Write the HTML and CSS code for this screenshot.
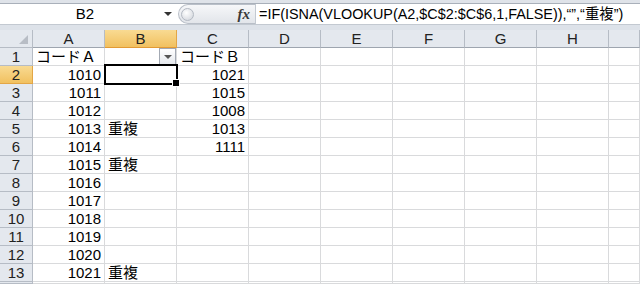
FILE: index.html
```html
<!DOCTYPE html>
<html lang="ja">
<head>
  <meta charset="UTF-8"/>
  <title>Book1 - Excel</title>
  <link rel="stylesheet" href="styles.css">
</head>
<body>

<div class="edge"></div>

<!-- formula bar -->
<div class="fbar">
  <div class="namebox"><span class="name">B2</span><span class="nb-arrow"></span></div>
  <div class="splitter"><span class="knob"></span><span class="fx">fx</span></div>
  <div class="formula">=IF(ISNA(VLOOKUP(A2,$C$2:$C$6,1,FALSE)),“”,“重複”)</div>
</div>
<div class="gap"></div>

<!-- sheet -->
<div class="sheet">
  <div class="row hdr">
    <div class="corner"><span class="tri"></span></div>
    <div class="ch">A</div><div class="ch sel">B</div><div class="ch">C</div><div class="ch">D</div>
    <div class="ch">E</div><div class="ch">F</div><div class="ch">G</div><div class="ch">H</div><div class="ch"></div>
  </div>
  <div class="row">
    <div class="rh">1</div><div class="c">コードＡ</div><div class="c drop"><span class="dd"></span></div><div class="c">コードＢ</div>
    <div class="c"></div><div class="c"></div><div class="c"></div><div class="c"></div><div class="c"></div><div class="c"></div>
  </div>
  <div class="row">
    <div class="rh sel">2</div><div class="c num">1010</div><div class="c cur"></div><div class="c num">1021</div>
    <div class="c"></div><div class="c"></div><div class="c"></div><div class="c"></div><div class="c"></div><div class="c"></div>
  </div>
  <div class="row">
    <div class="rh">3</div><div class="c num">1011</div><div class="c"></div><div class="c num">1015</div>
    <div class="c"></div><div class="c"></div><div class="c"></div><div class="c"></div><div class="c"></div><div class="c"></div>
  </div>
  <div class="row">
    <div class="rh">4</div><div class="c num">1012</div><div class="c"></div><div class="c num">1008</div>
    <div class="c"></div><div class="c"></div><div class="c"></div><div class="c"></div><div class="c"></div><div class="c"></div>
  </div>
  <div class="row">
    <div class="rh">5</div><div class="c num">1013</div><div class="c">重複</div><div class="c num">1013</div>
    <div class="c"></div><div class="c"></div><div class="c"></div><div class="c"></div><div class="c"></div><div class="c"></div>
  </div>
  <div class="row">
    <div class="rh">6</div><div class="c num">1014</div><div class="c"></div><div class="c num">1111</div>
    <div class="c"></div><div class="c"></div><div class="c"></div><div class="c"></div><div class="c"></div><div class="c"></div>
  </div>
  <div class="row">
    <div class="rh">7</div><div class="c num">1015</div><div class="c">重複</div><div class="c"></div>
    <div class="c"></div><div class="c"></div><div class="c"></div><div class="c"></div><div class="c"></div><div class="c"></div>
  </div>
  <div class="row">
    <div class="rh">8</div><div class="c num">1016</div><div class="c"></div><div class="c"></div>
    <div class="c"></div><div class="c"></div><div class="c"></div><div class="c"></div><div class="c"></div><div class="c"></div>
  </div>
  <div class="row">
    <div class="rh">9</div><div class="c num">1017</div><div class="c"></div><div class="c"></div>
    <div class="c"></div><div class="c"></div><div class="c"></div><div class="c"></div><div class="c"></div><div class="c"></div>
  </div>
  <div class="row">
    <div class="rh">10</div><div class="c num">1018</div><div class="c"></div><div class="c"></div>
    <div class="c"></div><div class="c"></div><div class="c"></div><div class="c"></div><div class="c"></div><div class="c"></div>
  </div>
  <div class="row">
    <div class="rh">11</div><div class="c num">1019</div><div class="c"></div><div class="c"></div>
    <div class="c"></div><div class="c"></div><div class="c"></div><div class="c"></div><div class="c"></div><div class="c"></div>
  </div>
  <div class="row">
    <div class="rh">12</div><div class="c num">1020</div><div class="c"></div><div class="c"></div>
    <div class="c"></div><div class="c"></div><div class="c"></div><div class="c"></div><div class="c"></div><div class="c"></div>
  </div>
  <div class="row">
    <div class="rh">13</div><div class="c num">1021</div><div class="c">重複</div><div class="c"></div>
    <div class="c"></div><div class="c"></div><div class="c"></div><div class="c"></div><div class="c"></div><div class="c"></div>
  </div>
  <div class="row last">
    <div class="rh"></div><div class="c"></div><div class="c"></div><div class="c"></div>
    <div class="c"></div><div class="c"></div><div class="c"></div><div class="c"></div><div class="c"></div><div class="c"></div>
  </div>
</div>

</body>
</html>
```

FILE: styles.css
```css
*{box-sizing:border-box}
body{margin:0;height:284px;overflow:hidden;background:#fff;color:#000;font-family:"Liberation Sans","Noto Sans CJK JP",sans-serif;font-size:15px}

/* window chrome */
.edge{height:4px;background:#dfe3e9;border-bottom:1px solid #a9b0ba}
.fbar{display:flex;height:21px;background:#fff;border-bottom:1px solid #c3c9d1}
.namebox{width:178px;display:flex;align-items:center}
.name{flex:1;text-align:center;line-height:20px;padding-left:6px}
.nb-arrow{width:0;height:0;border-left:4px solid transparent;border-right:4px solid transparent;border-top:4px solid #333;margin-right:6px}
.splitter{width:77px;display:flex;align-items:center;justify-content:space-between;padding:0 5px 0 2px;background:linear-gradient(#f6f7f9,#e2e5ea);border:1px solid #b9bfc8;border-right:none;border-radius:10px 0 0 10px}
.knob{width:13px;height:13px;border-radius:50%;background:radial-gradient(circle at 40% 35%,#fff,#cdd1d8);border:1px solid #b3b9c2}
.fx{font-family:"Liberation Serif",serif;font-style:italic;font-weight:bold;font-size:15px;color:#3a3a3a;line-height:18px}
.formula{flex:1;border-left:1px solid #c3c9d1;padding-left:3px;line-height:20px;white-space:nowrap;font-size:14.4px}
.gap{height:5px;background:#dde2e9}

/* grid */
.row{display:grid;grid-template-columns:33px repeat(8,72px) 1fr;height:18px}
.row.last{height:2px;overflow:hidden}
.c,.rh,.ch,.corner{border-right:1px solid #d9dadc;border-bottom:1px solid #d9dadc;line-height:17px;white-space:nowrap;padding:0 3px}
.num{text-align:right}
.rh,.ch,.corner{background:#e4e8ee;border-color:#b6bcc5;color:#222;text-align:center}
.ch{border-bottom-color:#9ea5af}
.sel{background:linear-gradient(#f9da92,#f1c160);border-color:#e3a646}
.ch.sel{border-bottom-color:#e29a35}
.corner{display:flex;align-items:flex-end;justify-content:flex-end;padding:0 4px 3px 0}
.tri{width:0;height:0;border-left:9px solid transparent;border-bottom:9px solid #b8bdc5}

/* B1 dropdown button */
.drop{display:flex;justify-content:flex-end;padding:0}
.dd{width:17px;height:17px;border:1px solid #a3a9b3;background:linear-gradient(#fff,#e5e8ed);display:flex;align-items:center;justify-content:center}
.dd::after{content:"";border-left:4px solid transparent;border-right:4px solid transparent;border-top:4px solid #555}

/* active cell */
.cur{position:relative}
.cur::before{content:"";position:absolute;left:-1px;top:-2px;right:-2px;bottom:-2px;border:2px solid #000}
.cur::after{content:"";position:absolute;right:-4px;bottom:-4px;width:6px;height:6px;background:#000;border:1px solid #fff}
```
